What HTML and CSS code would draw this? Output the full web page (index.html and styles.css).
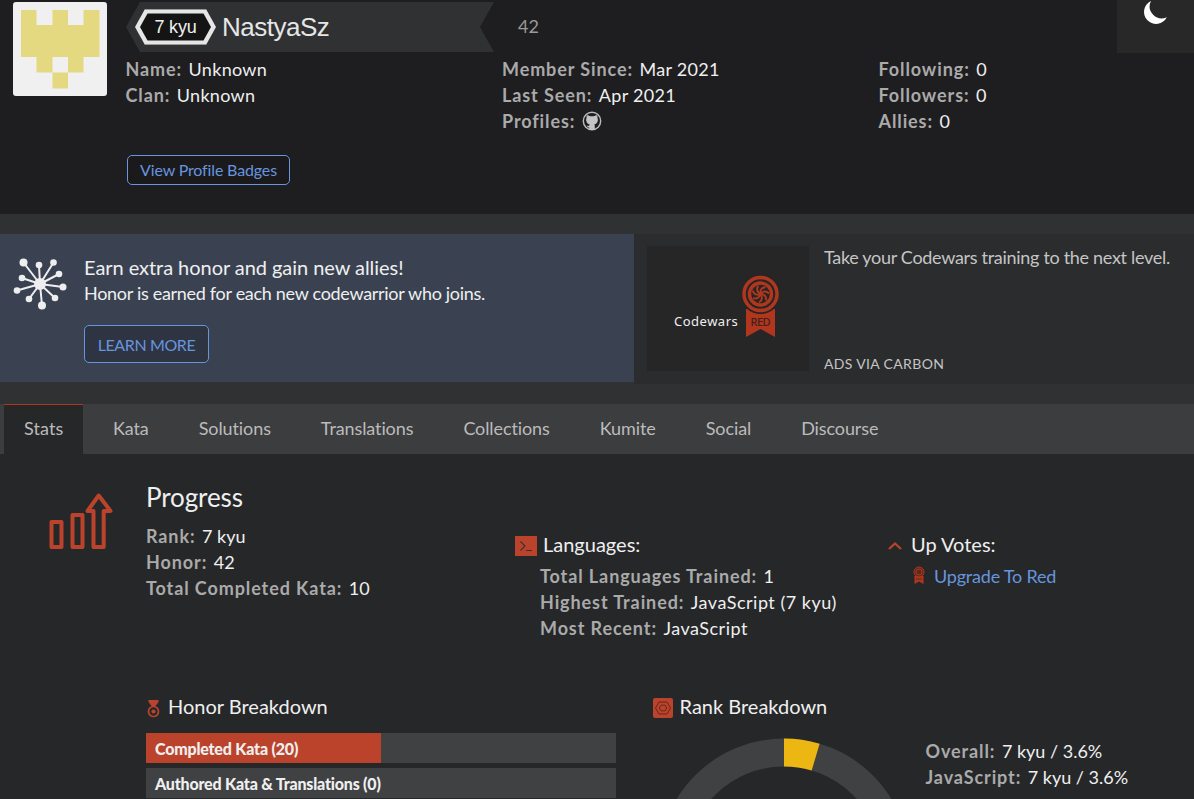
FILE: index.html
```html
<!DOCTYPE html>
<html lang="en">
<head>
<meta charset="utf-8">
<title>NastyaSz | Codewars</title>
<link rel="stylesheet" href="styles.css">
</head>
<body>
<header class="profile">
  <svg class="avatar" viewBox="0 0 94 94"><rect width="94" height="94" rx="3" fill="#f0f0f0"/><path fill="#e4d880" d="M8 8H23.500V23H39.500V8H55V23H70.500V8H86.500V55H70.500V70.500H55V86.500H39.500V70.500H23.500V55H8Z"/><path fill="#f0f0f0" d="M39.500 55H55V70.500H39.500Z"/></svg>
  <div class="identity">
    <div class="title-row">
      <div class="ribbon">
        <div class="rank"><svg width="81" height="36" viewBox="0 0 81 36"><path fill="#e6e6e6" d="M10 0H71L81 18L71 36H10L0 18Z"/><path d="M10 .5H71M10 35.500H71" stroke="#999"/><path fill="#141414" d="M12.500 4.500H68.500L76 18L68.500 31.500H12.500L5 18Z"/></svg><span>7 kyu</span></div>
        <h1>NastyaSz</h1>
      </div>
      <span class="honor">42</span>
    </div>
    <div class="facts">
      <div><p><b>Name:</b>Unknown</p><p><b>Clan:</b>Unknown</p></div>
      <div><p><b>Member Since:</b>Mar 2021</p><p><b>Last Seen:</b>Apr 2021</p><p><b>Profiles:</b><svg class="github" viewBox="0 0 20 20"><circle cx="10" cy="10" r="8.700" fill="none" stroke="#bbb" stroke-width="1.400"/><path fill="#c4c4c4" d="M4.800 4.300Q6.200 4 8 5.200H12Q13.800 4 15.200 4.300Q15.700 5.500 15.400 6.500Q16.600 9 15.200 11.600Q14.300 13 12.300 13.500Q12.800 14 12.800 15V18.500H7.200V16.500Q5.500 16.700 4.700 14.800Q6 14.600 7.200 15V14Q7.300 13.700 7.700 13.500Q5.700 13 4.800 11.600Q3.400 9 4.600 6.500Q4.300 5.500 4.800 4.300Z"/></svg></p></div>
      <div><p><b>Following:</b>0</p><p><b>Followers:</b>0</p><p><b>Allies:</b>0</p></div>
    </div>
    <a class="button badges">View Profile Badges</a>
  </div>
  <div class="theme"><svg width="24" height="26" viewBox="0 0 24 26"><path fill="#fff" d="M7 1A12 12 0 1 0 22.800 17.200A12 12 0 0 1 7 1Z"/></svg></div>
</header>

<section class="promos">
  <div class="invite">
    <svg class="network" width="54" height="54" viewBox="0 0 54 54"><path stroke="#eee" stroke-width="2" d="M27 27L10.500 5.500M27 27L26 8M27 27L40.500 5.500M27 27L46 17M27 27L50 30M27 27L42 41M27 27L29 48.500M27 27L16 42M27 27L4 33.500M27 27L9 21"/><g fill="#eee"><circle cx="27" cy="27" r="6"/><circle cx="10.500" cy="5.500" r="4"/><circle cx="26" cy="8" r="3.300"/><circle cx="40.500" cy="5.500" r="3.300"/><circle cx="46" cy="17" r="3.300"/><circle cx="50" cy="30" r="3.500"/><circle cx="42" cy="41" r="3.300"/><circle cx="29" cy="48.500" r="4"/><circle cx="16" cy="42" r="3.300"/><circle cx="4" cy="33.500" r="3.300"/><circle cx="9" cy="21" r="3.300"/></g></svg>
    <div>
      <h3>Earn extra honor and gain new allies!</h3>
      <p>Honor is earned for each new codewarrior who joins.</p>
      <a class="button learn">LEARN MORE</a>
    </div>
  </div>
  <div class="ad">
    <div class="ad-image">
      <span class="ad-brand">Codewars</span>
      <svg width="38" height="64" viewBox="0 0 38 64"><path fill="#b1361e" d="M4 34H33V62L18.500 54L4 62Z"/><circle cx="18.500" cy="19" r="20" fill="#262626"/><circle cx="18.500" cy="19" r="16.500" fill="#262626" stroke="#b1361e" stroke-width="3.500"/><circle cx="18.500" cy="19" r="11" fill="none" stroke="#b1361e" stroke-width="3.400"/><g fill="none" stroke="#b1361e" stroke-width="2" transform="translate(18.500 19)"><path id="blade" d="M0 0Q-1-6 5-7"/><use href="#blade" transform="rotate(51.400)"/><use href="#blade" transform="rotate(102.800)"/><use href="#blade" transform="rotate(154.300)"/><use href="#blade" transform="rotate(205.700)"/><use href="#blade" transform="rotate(257.100)"/><use href="#blade" transform="rotate(308.500)"/></g><text class="ad-red" x="8.500" y="51" textLength="20">RED</text></svg>
    </div>
    <div class="ad-copy"><p>Take your Codewars training to the next level.</p><small>ADS VIA CARBON</small></div>
  </div>
</section>

<nav class="tabs"><a class="active">Stats</a><a>Kata</a><a>Solutions</a><a>Translations</a><a>Collections</a><a>Kumite</a><a>Social</a><a>Discourse</a></nav>

<main>
  <section class="progress">
    <svg class="chart" width="66" height="60" viewBox="0 0 66 60"><g fill="none" stroke="#bb432c" stroke-width="4" stroke-linejoin="round"><path d="M3.500 31H13.500V56H3.500ZM24.500 24H34.500V56H24.500ZM45.500 56V20H39.500L50.700 4.500L62.500 20H55.700V56Z"/></g></svg>
    <div class="summary"><h2>Progress</h2><p><b>Rank:</b>7 kyu</p><p><b>Honor:</b>42</p><p><b>Total Completed Kata:</b>10</p></div>
    <div class="languages">
      <h3><svg width="22" height="20" viewBox="0 0 22 20"><path fill="#bb432c" d="M0 0H22V20H0Z"/><path d="M5.500 5.500L10 10L5.500 14.500M11 14.500H17" fill="none" stroke="#333" stroke-width="1.100"/></svg>Languages:</h3>
      <p><b>Total Languages Trained:</b>1</p><p><b>Highest Trained:</b>JavaScript (7 kyu)</p><p><b>Most Recent:</b>JavaScript</p>
    </div>
    <div class="votes">
      <h3><svg width="14" height="8" viewBox="0 0 14 8"><path d="M1 7L7 1.500L13 7" fill="none" stroke="#bb432c" stroke-width="2.200"/></svg>Up Votes:</h3>
      <a><svg width="12" height="18" viewBox="0 0 12 18"><path fill="#b1361e" d="M1.500 10H10.500V18L6 15.500L1.500 18Z"/><circle cx="6" cy="6" r="5" fill="#5c2920" stroke="#b1361e"/><circle cx="6" cy="6" r="3" fill="none" stroke="#b1361e"/><path d="M3 13H9" stroke="#5c2920" stroke-width="1.500" stroke-dasharray="1.500 .6"/></svg>Upgrade To Red</a>
    </div>
  </section>
  <section class="breakdowns">
    <div class="honor-breakdown">
      <h3><svg width="13" height="18" viewBox="0 0 13 18"><path fill="#bb432c" d="M1.500 0H11.500V2L8.500 6H4.500L1.500 2Z"/><circle cx="6.500" cy="11.500" r="5" fill="#262729" stroke="#bb432c" stroke-width="1.700"/><circle cx="6.500" cy="11.500" r="2.100" fill="#bb432c"/></svg>Honor Breakdown</h3>
      <div class="bar"><i></i><strong>Completed Kata (20)</strong></div>
      <div class="bar"><strong>Authored Kata &amp; Translations (0)</strong></div>
    </div>
    <div class="rank-breakdown">
      <h3><svg width="20" height="20" viewBox="0 0 20 20"><rect width="20" height="20" rx="2" fill="#bb432c"/><g fill="none" stroke="#63281e"><path d="M6 4H14L17.500 10L14 16H6L2.500 10ZM8 7.200H12L13.700 10L12 12.800H8L6.300 10Z"/></g></svg>Rank Breakdown</h3>
      <div class="rank-data">
        <svg class="donut" width="252" height="252" viewBox="0 0 252 252"><circle cx="126" cy="126" r="111.500" fill="none" stroke="#404143" stroke-width="28"/><path fill="#ecb613" d="M126 .5A125.500 125.500 0 0 1 161.600 5.700L153.700 32.600A97.500 97.500 0 0 0 126 28.500Z"/></svg>
        <div><p><b>Overall:</b>7 kyu / 3.6%</p><p><b>JavaScript:</b>7 kyu / 3.6%</p></div>
      </div>
    </div>
  </section>
</main>
</body>
</html>
```
FILE: styles.css
```css
* { box-sizing: border-box; }
html, body { height: 799px; overflow: hidden; }
body { margin: 0; background: #303133; color: #efefef; font: 18px/26px Lato, sans-serif; }
h1, h2, h3, p { margin: 0; font-weight: 400; }
svg { display: block; flex: none; }
b { color: #aaa; font-weight: 700; letter-spacing: .9px; margin-right: 6.500px; }
h3 { font-size: 20px; line-height: 26px; }

.profile { height: 214px; background: #1e1e20; display: flex; padding: 2px 0 0 13px; }
.avatar { width: 94px; height: 94px; margin-right: 19px; }
.identity { width: 991px; }
.title-row { display: flex; height: 50px; align-items: center; }
.ribbon { width: 368px; height: 50px; display: flex; align-items: center; padding-left: 9px; background: #303133; clip-path: polygon(14px 0, 100% 0, 354px 50%, 100% 100%, 14px 100%, 0 50%); }
.rank { display: grid; place-items: center; font: 18px/36px "Liberation Sans", sans-serif; letter-spacing: -.2px; }
.rank > * { grid-area: 1 / 1; }
h1 { font: 26px/50px "Liberation Sans", sans-serif; letter-spacing: -.5px; margin-left: 6px; color: #e6e6e6; }
.honor { margin-left: 24px; padding-bottom: 2px; color: #999; }
.facts { display: grid; grid-template-columns: 376.500px 376.500px 1fr; height: 103px; margin-left: -.500px; padding-top: 4px; letter-spacing: .3px; }
.facts p { display: flex; }
.github { width: 20px; height: 20px; align-self: center; }
.button { display: flex; align-items: center; justify-content: center; border: 1px solid #6795de; border-radius: 5px; color: #6795de; font-size: 16px; }
.badges { width: 163px; height: 30px; margin-left: 1px; background: #1a1a1c; letter-spacing: -.15px; }
.theme { width: 77px; height: 53px; margin: -2px 0 0 auto; padding-left: 27px; background: #282828; }

.promos { height: 190px; padding-top: 20px; display: flex; align-items: flex-start; }
.invite { width: 634px; height: 148px; background: #3a4252; display: flex; padding: 20px 0 0 13px; }
.invite h3 { letter-spacing: -.05px; }
.network { margin: 3px 17px 0 0; }
.invite p { letter-spacing: -.3px; }
.learn { width: 125px; height: 38px; margin-top: 19px; padding-top: 2px; background: #2e3442; letter-spacing: -.4px; }
.ad { flex: 1; height: 150px; background: #2b2c2e; display: flex; padding: 12px 0 0 13px; }
.ad-image { width: 162px; height: 125px; background: #262626; display: flex; padding: 29px 0 0 27px; gap: 4px; }
.ad-brand { width: 64px; padding-top: 33px; font: 13px/26px "Noto Sans", sans-serif; letter-spacing: .5px; }
.ad-red { font: 500 11px "Noto Sans", sans-serif; fill: #3e211c; }
.ad-copy { padding-left: 15px; height: 132px; display: flex; flex-direction: column; justify-content: space-between; color: #c5c5c5; letter-spacing: -.3px; }
.ad-copy p { line-height: 22px; }
.ad-copy small { font-size: 14px; line-height: 28px; letter-spacing: .35px; }

.tabs { height: 50px; background: #3c3d3f; display: flex; padding-left: 4px; }
.tabs a { padding: 0 20px 0 30px; line-height: 48px; color: #bbb; letter-spacing: -.1px; }
.tabs .active { width: 79px; padding: 0 20px; background: #262729; border-top: 1px solid #b1361e; line-height: 46px; letter-spacing: .1px; }

main { height: 345px; background: #262729; overflow: hidden; }
.progress { height: 239px; display: grid; grid-template-columns: 98px 369px 373px 1fr; padding-left: 48px; }
.chart { margin-top: 37px; }
.summary h2 { font-size: 26px; line-height: 34px; padding-top: 26px; height: 69px; letter-spacing: -.1px; }
.languages, .votes { padding-top: 77px; }
.languages h3, .votes h3 { display: flex; align-items: center; gap: 6px; margin-bottom: 6px; }
main h3 svg { margin-top: 4px; }
.languages p { margin-left: 25px; letter-spacing: .5px; }
.votes h3 { gap: 9px; }
.votes a { display: flex; align-items: center; gap: 9px; margin-left: 25px; color: #6795de; letter-spacing: -.2px; }
.votes a svg { margin-bottom: 2px; }
.breakdowns { display: grid; grid-template-columns: 507px 1fr; padding-left: 146px; }
.breakdowns h3 { display: flex; align-items: center; gap: 8px; margin-bottom: 14px; }
.honor-breakdown h3 svg { margin: 5px 0 0 1px; }
.rank-breakdown h3 { gap: 6.500px; }
.bar { position: relative; width: 470px; height: 30px; margin-bottom: 5px; background: #404143; line-height: 32px; font-size: 16px; letter-spacing: -.2px; }
.bar i { display: block; width: 50%; height: 30px; background: #bb432c; }
.bar strong { position: absolute; left: 9px; top: 0; font-weight: 900; }
.rank-data { display: flex; margin-left: 5px; }
.donut { margin-top: 5px; }
.rank-data > div { padding: 5px 0 0 15.500px; }
```
